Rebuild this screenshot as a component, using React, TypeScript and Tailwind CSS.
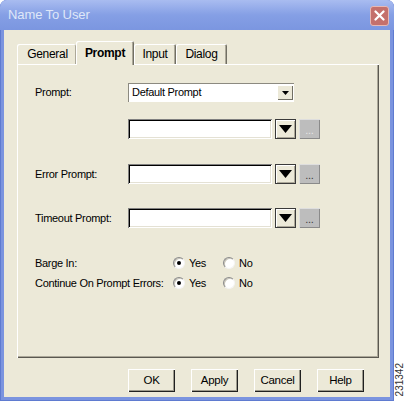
import React from "react";

function Tri({ w = 13, h = 8 }: { w?: number; h?: number }) {
  return (
    <svg width={w} height={h} viewBox={`0 0 ${w} ${h}`}>
      <polygon points={`0,0 ${w},0 ${w / 2},${h}`} fill="#000" />
    </svg>
  );
}

function TriButton() {
  return (
    <div className="ml-[3px] w-[21px] h-[20px] bg-[#ece9d8] border border-[#3a3a3a] shadow-[inset_1px_1px_0_#fff,inset_-1px_-1px_0_#aca899] flex items-center justify-center">
      <Tri />
    </div>
  );
}

function DotsButton({ disabled }: { disabled?: boolean }) {
  return (
    <div
      className={
        "ml-[3px] w-[21px] h-[20px] bg-[#bdbdbd] shadow-[inset_1px_1px_0_#dedede,inset_-1px_-1px_0_#8a8a8a] flex items-end justify-center pb-[3px] leading-none text-[11px] " +
        (disabled ? "text-[#e6e6e6]" : "text-[#3c3c3c]")
      }
    >
      ...
    </div>
  );
}

function PromptRow({ label, mt, disabled }: { label: string; mt: string; disabled?: boolean }) {
  return (
    <div className={"flex items-center h-[20px] " + mt}>
      <div className="w-[93px]">{label}</div>
      <div className="w-[144px] h-[20px] bg-white shadow-[inset_1px_1px_0_#808080,inset_-1px_-1px_0_#fff,inset_2px_2px_0_#000,inset_-2px_-2px_0_#e4e1d4]" />
      <TriButton />
      <DotsButton disabled={disabled} />
    </div>
  );
}

function Radio({ checked, label, w }: { checked?: boolean; label: string; w: string }) {
  return (
    <div className={"flex items-center " + w}>
      <div className="w-[12px] h-[12px] rounded-full bg-white border border-t-[#8a8a8a] border-l-[#8a8a8a] border-b-[#f4f4f4] border-r-[#f4f4f4] shadow-[inset_1px_1px_0_#c8c5b8] flex items-center justify-center">
        {checked && <div className="w-[4px] h-[4px] rounded-full bg-black" />}
      </div>
      <span className="ml-[4px]">{label}</span>
    </div>
  );
}

function Btn({ label }: { label: string }) {
  return (
    <div className="w-[47px] h-[23px] bg-[#ece9d8] flex items-center justify-center text-[11.5px] shadow-[inset_1px_1px_0_#fff,inset_-1px_-1px_0_#202020,inset_-2px_-2px_0_#9d9a8c]">
      {label}
    </div>
  );
}

export default function App() {
  return (
    <div className="w-[406px] h-[402px] bg-white flex font-['Liberation_Sans',Arial,sans-serif] text-[11px] tracking-[-0.3px] text-black">
      <div className="w-[394px] h-[401px] flex flex-col rounded-t-[7px] bg-[#7b94df] overflow-hidden shadow-[inset_1px_0_0_#5f7bd0,inset_-1px_0_0_#5f7bd0,inset_0_-1px_0_#5f7bd0]">
        {/* Title bar */}
        <div className="h-[30px] shrink-0 flex items-center pl-[8px] pr-[5px] bg-gradient-to-b from-[#a9bcf0] via-[#859fe5] to-[#7b96e0]">
          <span className="flex-1 text-[13px] tracking-[-0.1px] text-[#dfe7f8]">Name To User</span>
          <div className="mt-[1px] w-[19px] h-[20px] rounded-[3px] bg-[#c4706c] border border-[#e6b8b4] flex items-center justify-center">
            <svg width="11" height="11" viewBox="0 0 11 11">
              <path d="M1.5 1.5 L9.5 9.5 M9.5 1.5 L1.5 9.5" stroke="#fff" strokeWidth="2.2" strokeLinecap="round" />
            </svg>
          </div>
        </div>

        {/* Content */}
        <div className="flex-1 mx-[4px] mb-[4px] bg-[#ece9d8] flex flex-col">
          {/* Tabs */}
          <div className="mt-[11px] ml-[13px] h-[23px] flex items-end relative z-10 text-[12px]">
            <div className="w-[59px] h-[20px] rounded-t-[2px] flex items-center justify-center pl-[2px] shadow-[inset_1px_1px_0_#fff,inset_-1px_0_0_#aca899]">
              General
            </div>
            <div className="w-[58px] h-[24px] -mb-[1px] bg-[#ece9d8] rounded-t-[2px] flex items-start pt-[3px] justify-center font-bold shadow-[inset_1px_1px_0_#fff,inset_-1px_0_0_#716f64,inset_-2px_0_0_#aca899]">
              Prompt
            </div>
            <div className="w-[42px] h-[20px] rounded-t-[2px] flex items-center justify-center shadow-[inset_1px_1px_0_#fff,inset_-1px_0_0_#716f64,inset_-2px_0_0_#aca899]">
              Input
            </div>
            <div className="w-[51px] h-[20px] rounded-t-[2px] flex items-center justify-center shadow-[inset_1px_1px_0_#fff,inset_-1px_0_0_#716f64,inset_-2px_0_0_#aca899]">
              Dialog
            </div>
          </div>

          {/* Panel */}
          <div className="ml-[13px] w-[362px] h-[294px] shrink-0 shadow-[inset_1px_1px_0_#fff,inset_-1px_-1px_0_#5a5850,inset_-2px_-2px_0_#aca899] pl-[18px] pt-[19px] flex flex-col">
            <div className="flex items-center h-[19px]">
              <div className="w-[93px]">Prompt:</div>
              <div className="w-[166px] h-[19px] bg-white shadow-[inset_1px_1px_0_#8c8a80,inset_-1px_-1px_0_#fff] flex items-center pl-[4px] pr-[1px]">
                <span className="flex-1">Default Prompt</span>
                <div className="w-[16px] h-[15px] bg-[#ece9d8] shadow-[inset_1px_1px_0_#fff,inset_-1px_-1px_0_#716f64] flex items-center justify-center">
                  <Tri w={7} h={4} />
                </div>
              </div>
            </div>
            <PromptRow label="" mt="mt-[17px]" disabled />
            <PromptRow label="Error Prompt:" mt="mt-[25px]" />
            <PromptRow label="Timeout Prompt:" mt="mt-[24px]" />
            <div className="flex items-center h-[16px] mt-[27px]">
              <div className="w-[138px]">Barge In:</div>
              <Radio checked label="Yes" w="w-[50px]" />
              <Radio label="No" w="w-[40px]" />
            </div>
            <div className="flex items-center h-[16px] mt-[4px]">
              <div className="w-[138px]">Continue On Prompt Errors:</div>
              <Radio checked label="Yes" w="w-[50px]" />
              <Radio label="No" w="w-[40px]" />
            </div>
          </div>

          {/* Buttons */}
          <div className="mt-[11px] ml-[124px] flex gap-[16px]">
            <Btn label="OK" />
            <Btn label="Apply" />
            <Btn label="Cancel" />
            <Btn label="Help" />
          </div>
        </div>
      </div>
      <div className="flex-1 flex flex-col justify-end items-center pb-[6px]">
        <span className="[writing-mode:vertical-rl] rotate-180 text-[10px] tracking-[0px] text-[#333] leading-none">231342</span>
      </div>
    </div>
  );
}
